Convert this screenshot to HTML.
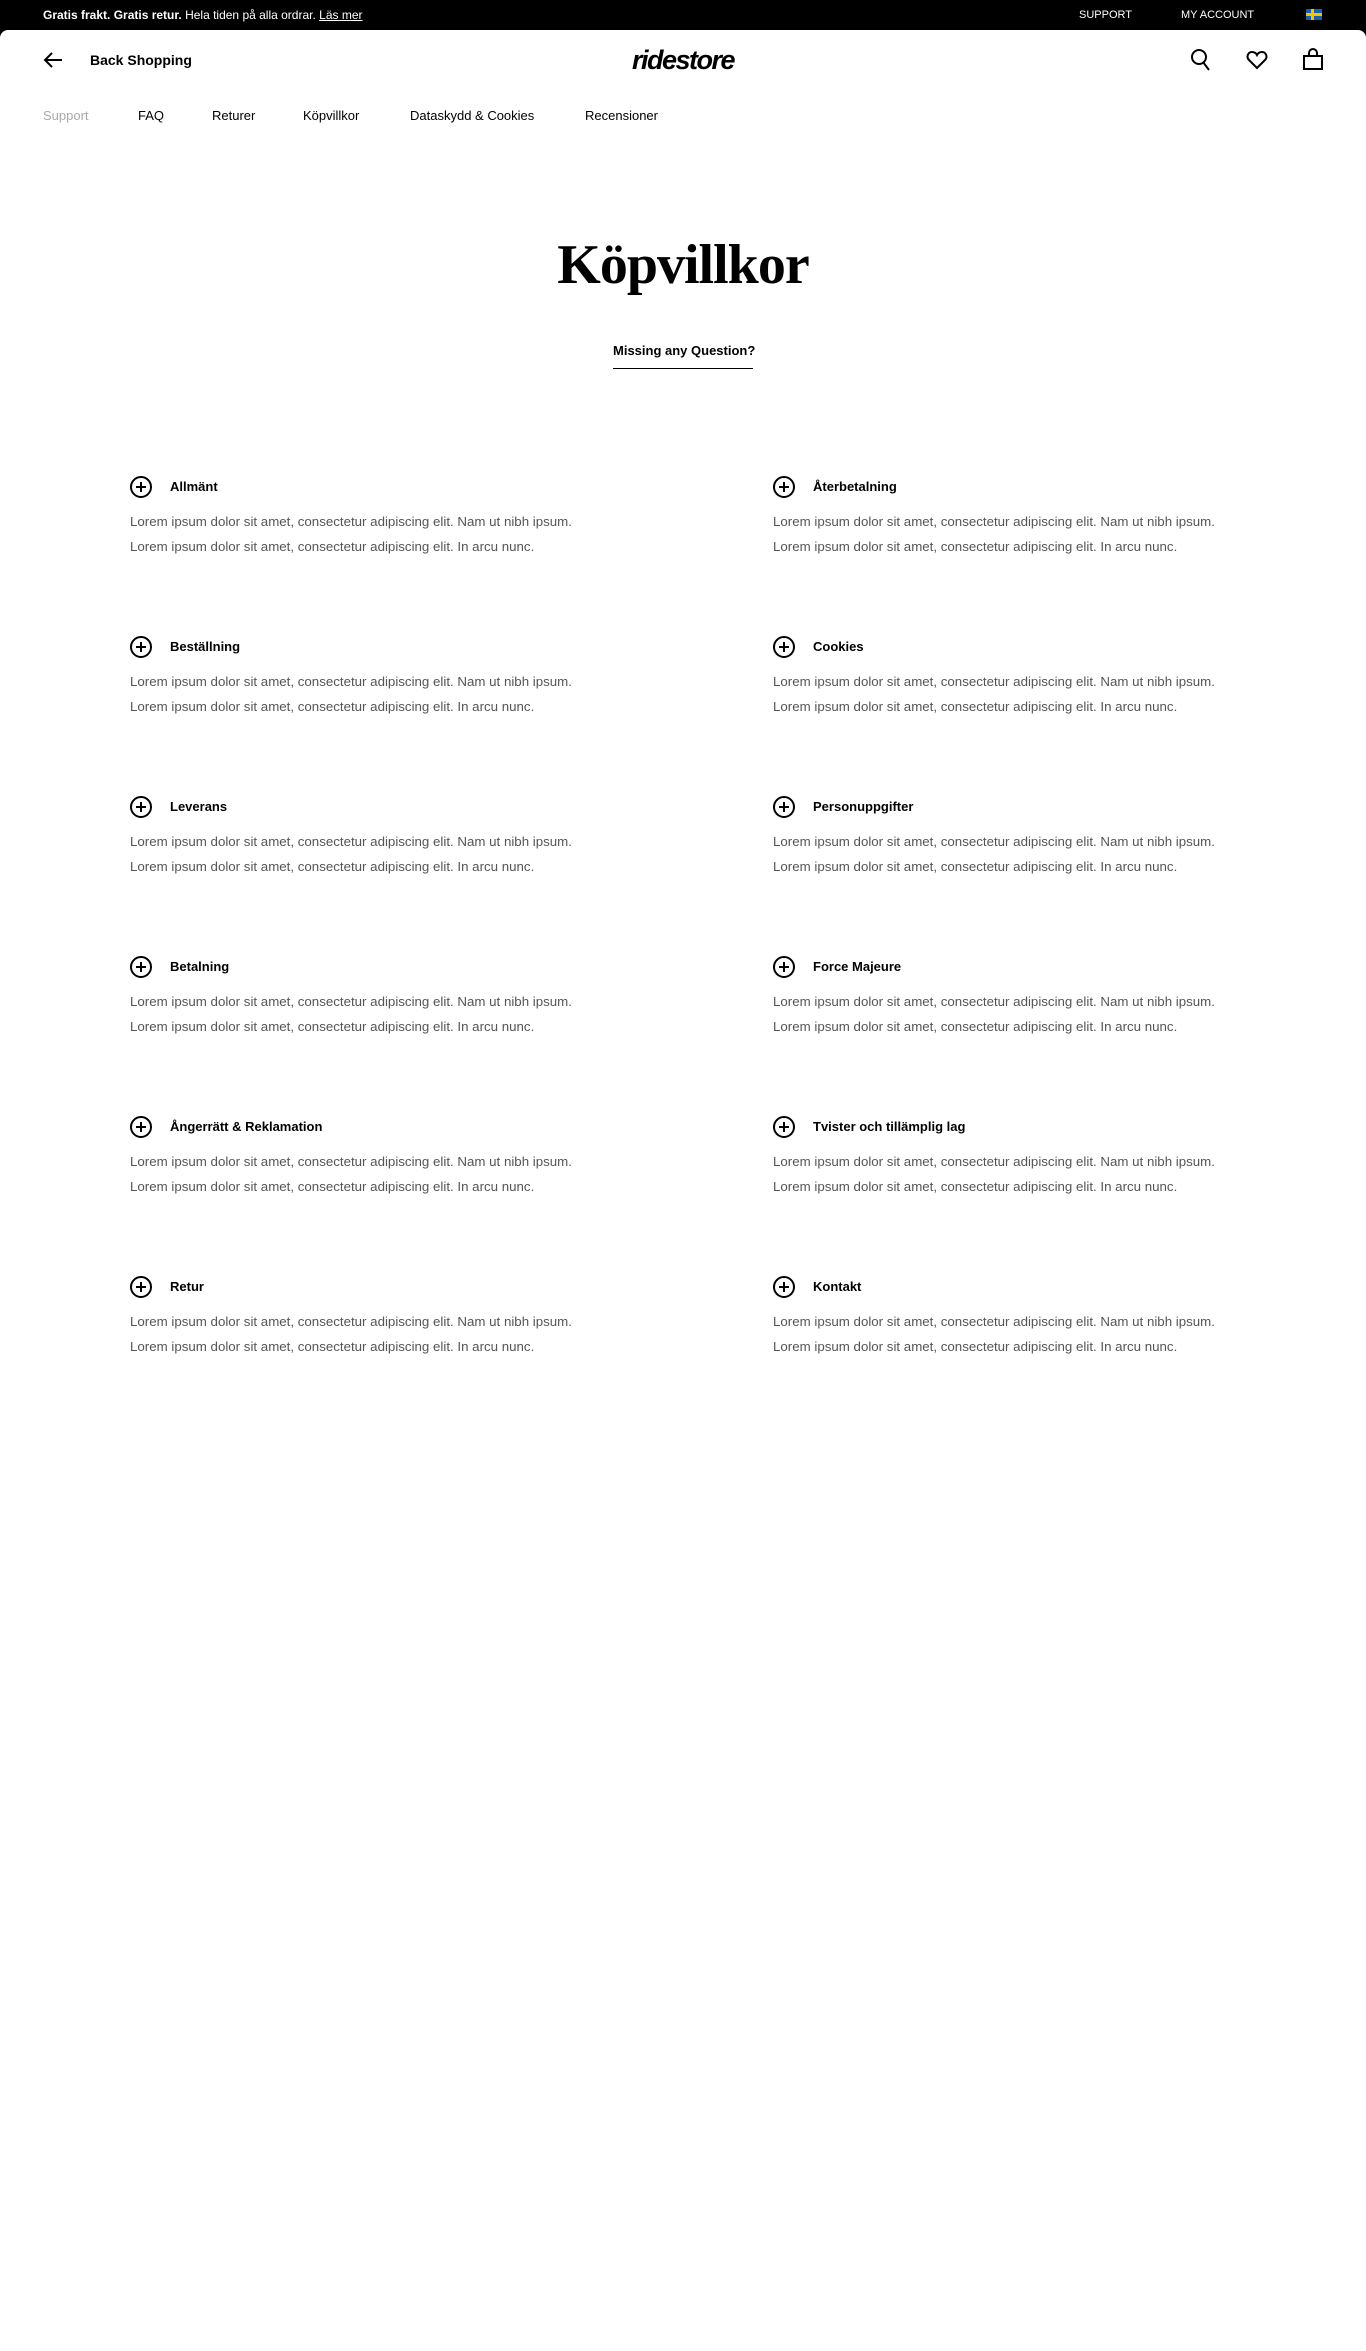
<!DOCTYPE html>
<html><head><meta charset="utf-8"><style>
*{margin:0;padding:0;box-sizing:border-box}
body{width:1366px;height:2351px;background:#fff;font-family:"Liberation Sans",sans-serif;color:#000;position:relative;overflow:hidden}
.top{position:absolute;left:0;top:0;width:1366px;height:40px;background:#000;color:#fff;font-size:12px}
.top span{position:absolute;top:8px}
.hdr{position:absolute;left:0;top:30px;width:1366px;height:100px;background:#fff;border-radius:8px 8px 0 0}
.a{position:absolute}
.nav{position:absolute;top:108px;font-size:13px}
.item{position:absolute;width:560px}
.item .ic{position:absolute;left:0;top:0;width:22px;height:22px}
.item h4{position:absolute;left:40px;top:3px;font-size:13px;font-weight:bold}
.item p{position:absolute;left:0;font-size:13.3px;color:#555;white-space:nowrap}
</style></head><body>
<div class="top">
<span style="left:43px"><b>Gratis frakt. Gratis retur.</b> Hela tiden på alla ordrar. <u>Läs mer</u></span>
<span style="left:1079px;font-size:11px;top:9px">SUPPORT</span>
<span style="left:1181px;font-size:11px;top:9px">MY ACCOUNT</span>
<span style="left:1306px;top:9px;width:16px;height:11px;background:#1a5fa8"><i style="position:absolute;left:5px;top:0;width:3px;height:11px;background:#f5c400"></i><i style="position:absolute;left:0;top:4px;width:16px;height:3px;background:#f5c400"></i></span>
</div>
<div class="hdr"></div>
<svg class="a" style="left:42px;top:50px" width="22" height="20" viewBox="0 0 22 20"><path d="M20 10H3M10 3L3 10l7 7" fill="none" stroke="#000" stroke-width="2"/></svg>
<div class="a" style="left:90px;top:52px;font-size:14px;font-weight:bold">Back Shopping</div>
<div class="a" style="left:632px;top:45px;font-size:27px;font-weight:bold;font-style:italic;letter-spacing:-1.5px">ridestore</div>
<svg class="a" style="left:1189px;top:48px" width="22" height="24" viewBox="0 0 22 24"><circle cx="10" cy="9" r="7" fill="none" stroke="#000" stroke-width="2"/><path d="M14 14l6 8" stroke="#000" stroke-width="2"/></svg>
<svg class="a" style="left:1246px;top:50px" width="22" height="20" viewBox="0 0 22 20"><path d="M11 18L3 10C0 7 2 2 6 2c2 0 4 1 5 3 1-2 3-3 5-3 4 0 6 5 3 8z" fill="none" stroke="#000" stroke-width="2"/></svg>
<svg class="a" style="left:1302px;top:48px" width="22" height="24" viewBox="0 0 22 24"><rect x="2" y="8" width="18" height="13" fill="none" stroke="#000" stroke-width="2"/><path d="M7 8V5a4 4 0 0 1 8 0v3" fill="none" stroke="#000" stroke-width="2"/></svg>
<div class="nav" style="left:43px;color:#aaa">Support</div>
<div class="nav" style="left:138px">FAQ</div>
<div class="nav" style="left:212px">Returer</div>
<div class="nav" style="left:303px">Köpvillkor</div>
<div class="nav" style="left:410px">Dataskydd &amp; Cookies</div>
<div class="nav" style="left:585px">Recensioner</div>
<div class="a" style="left:0;width:1366px;top:233px;text-align:center;font-family:'Liberation Serif',serif;font-weight:bold;font-size:56px;letter-spacing:-1px">Köpvillkor</div>
<div class="a" style="left:613px;top:343px;width:140px;text-align:center;font-size:13px;font-weight:bold;white-space:nowrap;height:26px;border-bottom:1.5px solid #000">Missing any Question?</div>
<div id="items"></div>
<script>
var L=["Allmänt","Beställning","Leverans","Betalning","Ångerrätt & Reklamation","Retur"],R=["Återbetalning","Cookies","Personuppgifter","Force Majeure","Tvister och tillämplig lag","Kontakt"],h="";
function it(x,y,t){return '<div class="item" style="left:'+x+'px;top:'+y+'px"><svg class="ic" viewBox="0 0 22 22"><circle cx="11" cy="11" r="10" fill="none" stroke="#000" stroke-width="2"/><path d="M11 6v10M6 11h10" stroke="#000" stroke-width="2"/></svg><h4>'+t.replace("&","&amp;")+'</h4><p style="top:38px">Lorem ipsum dolor sit amet, consectetur adipiscing elit. Nam ut nibh ipsum.</p><p style="top:63px">Lorem ipsum dolor sit amet, consectetur adipiscing elit. In arcu nunc.</p></div>';}
for(var i=0;i<6;i++){h+=it(130,476+i*160,L[i]);h+=it(773,476+i*160,R[i]);}
document.getElementById("items").innerHTML=h;
</script>
</body></html>
